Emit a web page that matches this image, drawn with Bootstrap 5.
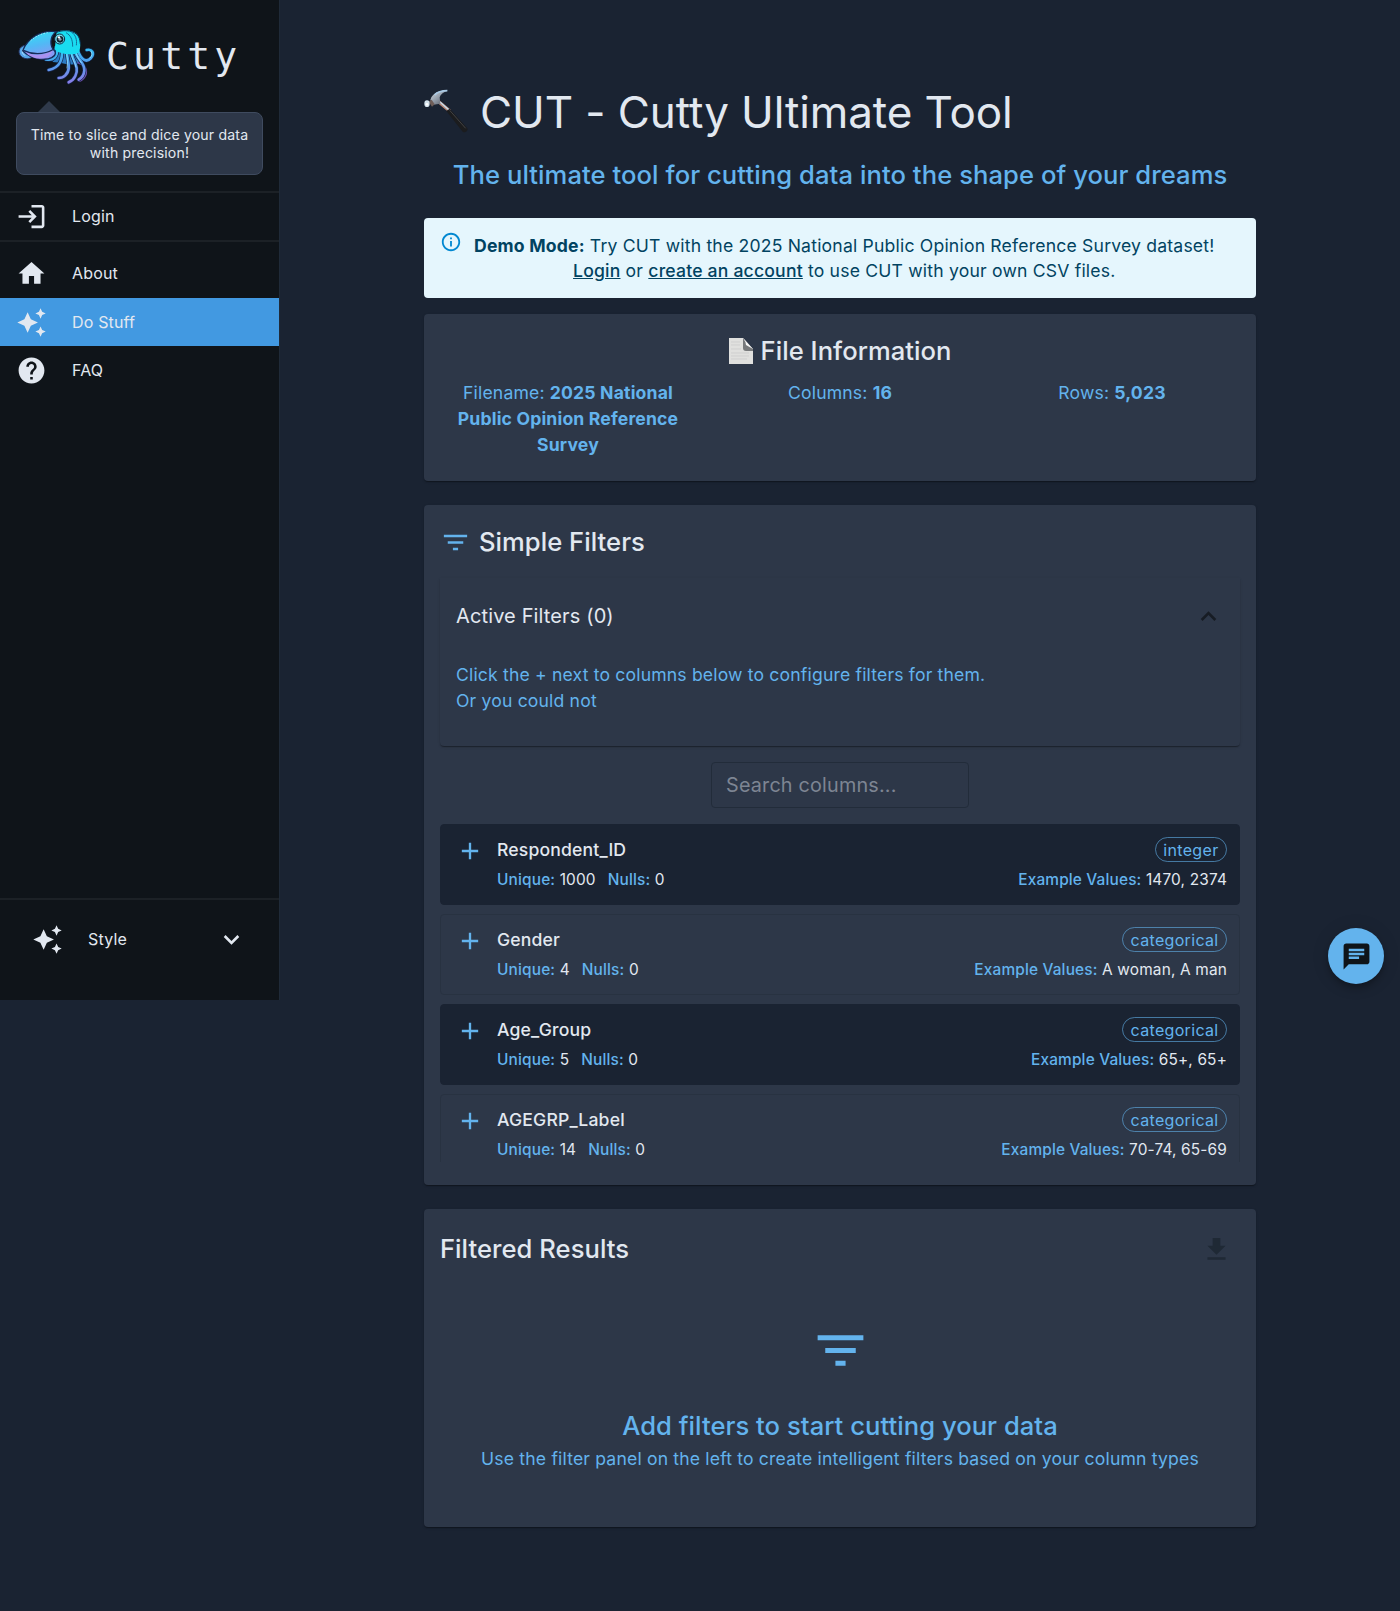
<!DOCTYPE html>
<html lang="en">
<head>
<meta charset="utf-8">
<meta name="viewport" content="width=device-width, initial-scale=1">
<title>CUT - Cutty Ultimate Tool</title>
<link href="https://cdn.jsdelivr.net/npm/bootstrap@5.3.0/dist/css/bootstrap.min.css" rel="stylesheet">
<style>
:root{--ink:#e2e8f0;--accent:#63b3ed;--panel:#2d3748;--page:#1a2332;--deep:#0f1419}
body{background:var(--page);color:var(--ink);font-family:Inter,"Liberation Sans",sans-serif;font-size:17.6px;line-height:1.5;letter-spacing:.00938em}
svg{display:block;flex:none}
.ico{width:31px;height:31px;fill:currentColor}
.accent{color:var(--accent)}
.side{width:280px;height:1000px;background:var(--deep);border-right:1px solid #1f2a38}
.brand-row{height:101px;padding:20px 0 0 10px}
.squid{width:90px;height:70px}
.wordmark{font:400 38px/1 "DejaVu Sans Mono",monospace;letter-spacing:4.2px;color:var(--ink);margin:17px 0 0 6px}
.caret{width:0;height:0;margin-left:38px;border:11px solid transparent;border-top:0;border-bottom-color:#2f3a4b}
.bubble{margin:0 16px 16px;height:63px;padding:13px 8px 10px;background:var(--panel);border:1px solid #3f4b5f;border-radius:8px;font-size:14.08px;line-height:18.2px;text-align:center}
.rule{height:2px;background:#1c2126}
.item{height:48px;padding-left:16px;gap:25px;font-size:16px;color:var(--ink);text-decoration:none}
.item.current{background:#4299e1}
.item.login{height:47px;padding-bottom:1px}
.item.about{padding-bottom:2px}
.style-item{height:80px;padding:0 32px 2px}
.main-col{width:832px;margin:84px auto 83px}
.title{font-size:44px;line-height:56px;font-weight:400;letter-spacing:-.002em;gap:10px;margin:0}
.tagline{font-size:25.6px;line-height:34px;font-weight:500;letter-spacing:.0028em;margin:18px 0 26px;text-align:center}
.notice{height:80px;margin-bottom:16px;padding:6px 16px;background:#e5f6fd;color:#014361;border-radius:4px;line-height:25.17px;letter-spacing:.01071em}
.notice a{color:inherit;font-weight:500}
.notice .info{width:22px;height:22px;fill:#0288d1;margin:7px 12px 0 0}
.notice .msg{padding-top:9px}
.panel{background:var(--panel);border-radius:4px;box-shadow:0 2px 1px -1px rgba(0,0,0,.2),0 1px 1px rgba(0,0,0,.14),0 1px 3px rgba(0,0,0,.12);padding:16px}
.panel h2,.empty h3{font-size:25.6px;line-height:34px;font-weight:500;letter-spacing:.0015em;margin:0}
.file{height:167px;margin-bottom:24px;padding-top:20px;text-align:center}
.file .cols{gap:16px;margin-top:12px;line-height:26px}
.filters{height:680px;margin-bottom:24px;padding-top:20px}
.acc{height:168px;margin-top:19px;padding:0 16px;border-radius:0 0 4px 4px;box-shadow:0 2px 1px -1px rgba(0,0,0,.2),0 1px 1px rgba(0,0,0,.14),0 1px 3px rgba(0,0,0,.12)}
.acc-head{height:76px;font-size:20px;letter-spacing:.0065em}
.acc-head svg{fill:#171c24;margin-right:0}
.acc p{margin:8px 0 0;line-height:26.4px}
.search{width:258px;height:46px;margin:16px auto;padding:0 14px;background:transparent;border:1px solid #222c3a;border-radius:4px;font-size:19.8px;letter-spacing:.00938em;color:var(--ink)}
.search::placeholder{color:#7d8593;opacity:1}
.search:focus{background:transparent;color:var(--ink)}
.rows{height:338px;overflow:hidden}
.col-item{height:81px;margin-bottom:9px;border:1px solid #283241;border-radius:4px;padding:11px 12px 0 15px}
.col-item.dark{background:var(--page);border-color:#1a2332}
.plus{width:28px;height:28px;fill:var(--accent);margin:1px 13px 0 0}
.nm{font-weight:500;line-height:27px;letter-spacing:.00938em}
.meta{font-size:15.4px;line-height:24px;margin-top:5px;letter-spacing:.0107em}
.meta b{font-weight:500;color:var(--accent)}
.chip{height:25px;padding:0 7.5px;border:1px solid rgba(99,179,237,.6);border-radius:13px;color:var(--accent);font-size:16px;line-height:24px;margin-top:1px;letter-spacing:.02em}
.results{height:318px;padding-top:23px}
.results .dl{fill:#1f2935;margin-right:8px}
.empty{margin-top:54px;text-align:center}
.empty .big{width:61px;height:61px;margin:0 auto 28px}
.empty h3{margin-bottom:3px}
.fab{position:fixed;left:1328px;top:928px;width:56px;height:56px;border-radius:50%;background:var(--accent);color:var(--deep);border:0;box-shadow:0 3px 5px -1px rgba(0,0,0,.2),0 6px 10px rgba(0,0,0,.14),0 1px 18px rgba(0,0,0,.12)}
</style>
</head>
<body>
<svg width="0" height="0" class="position-absolute" aria-hidden="true">
<symbol id="i-spark" viewBox="0 0 24 24"><path d="m19 9 1.25-2.75L23 5l-2.75-1.25L19 1l-1.25 2.75L15 5l2.75 1.25L19 9zm-7.5.5L9 4 6.5 9.5 1 12l5.500 2.500L9 20l2.500-5.500L17 12l-5.500-2.500zM19 15l-1.250 2.750L15 19l2.750 1.250L19 23l1.250-2.750L23 19l-2.750-1.250L19 15z"/></symbol>
<symbol id="i-filter" viewBox="0 0 24 24"><path d="M10 18h4v-2h-4v2zM3 6v2h18V6H3zm3 7h12v-2H6v2z"/></symbol>
<symbol id="i-plus" viewBox="0 0 24 24"><path d="M19 13h-6v6h-2v-6H5v-2h6V5h2v6h6v2z"/></symbol>
</svg>
<div class="d-flex align-items-start">
<aside class="side d-flex flex-column flex-shrink-0">
  <div class="brand-row d-flex align-items-start">
    <svg class="squid" viewBox="0 0 270 210" aria-hidden="true">
      <defs>
        <linearGradient id="mantle" x1=".3" y1="0" x2=".6" y2="1"><stop offset="0" stop-color="#2fe0f5"/><stop offset=".5" stop-color="#52b8f5"/><stop offset="1" stop-color="#8f95f4"/></linearGradient>
        <linearGradient id="arm" gradientUnits="userSpaceOnUse" x1="170" y1="50" x2="180" y2="195"><stop offset="0" stop-color="#16e1f5"/><stop offset=".5" stop-color="#4ba4ee"/><stop offset="1" stop-color="#8f7ae6"/></linearGradient>
      </defs>
      <path d="M46 76c-20 2-26 25-9 36 10 6 22 5 28 0L44 98z" fill="#57a5e8" stroke="#26335f" stroke-width="3"/>
      <path d="M37 88q-4 12 8 19" fill="none" stroke="#b5e6ff" stroke-width="3"/>
      <path d="M134 78h72q2 24 10 40l-14 14q-26 4-52-4l-22-2z" fill="#2b7cc4"/>
      <g fill="none" stroke-linecap="round">
        <path d="M205 128c20 8 28 22 21 38-4 9-10 14-18 17" stroke="#6a4fae" stroke-width="6"/>
        <g stroke="#142349" stroke-width="12"><path d="M198 72c10 44 28 60 45 42 12-14 3-28-13-24"/><path d="M192 80c2 38 34 44 31 72-1 12-8 22-17 27"/><path d="M182 80c-2 38 30 56 14 88-5 11-13 16-20 19"/><path d="M170 82c-2 35 18 63-4 84-6 6-14 8-20 8"/><path d="M156 84c2 34-4 58-40 66"/><path d="M143 85c-2 26-12 38-36 33"/></g>
        <g stroke="url(#arm)" stroke-width="8"><path d="M198 72c10 44 28 60 45 42 12-14 3-28-13-24"/><path d="M192 80c2 38 34 44 31 72-1 12-8 22-17 27"/><path d="M182 80c-2 38 30 56 14 88-5 11-13 16-20 19"/><path d="M170 82c-2 35 18 63-4 84-6 6-14 8-20 8"/><path d="M156 84c2 34-4 58-40 66"/><path d="M143 85c-2 26-12 38-36 33"/></g>
        <g stroke="#a6efff" stroke-width="2"><path d="M197 96c5 16 10 22 17 32"/><path d="M184 100c2 18 12 28 14 41"/><path d="M170 100q4 28 1 44"/><path d="M243 94q7 11-3 20"/></g>
      </g>
      <path d="M140 37c16-9 46-8 60 5 12 12 14 40 6 56-16 8-57 7-72-10z" fill="#19dcf1"/>
      <path d="M138 38c18-9 46-8 61 4 8 7 11 16 12 30" fill="none" stroke="#0c3659" stroke-width="3"/>
      <path d="M168 38c14 8 20 20 20 42M184 36c14 9 17 24 15 40" fill="none" stroke="#126e9a" stroke-width="3"/>
      <path d="M38 92c15-37 54-63 100-57-18 14-21 42-4 58 5 8 1 14-9 20-21 11-64 2-87-21z" fill="url(#mantle)" stroke="#172a56" stroke-width="4"/>
      <path d="M42 92c30 18 61 16 88-3-10 29-47 35-75 16z" fill="#aa91ef"/>
      <path d="M40 91q46 22 93-4" fill="none" stroke="#182b59" stroke-width="4"/>
      <path d="M62 62q22-20 51-24" fill="none" stroke="#b7f8ff" stroke-width="3" stroke-dasharray="4 5"/>
      <circle cx="149" cy="57" r="15" fill="#70d6e7" stroke="#102742" stroke-width="3"/><circle cx="150" cy="58" r="10" fill="#10202f"/><circle cx="150" cy="58" r="4.500" fill="#849eb1"/><circle cx="147" cy="52" r="3.500" fill="#fff"/>
    </svg>
    <div class="wordmark">Cutty</div>
  </div>
  <div class="caret"></div>
  <div class="bubble">Time to slice and dice your data with precision!</div>
  <div class="rule"></div>
  <a class="item login d-flex align-items-center" href="#"><svg class="ico" viewBox="0 0 24 24"><path d="M11 7 9.600 8.400l2.600 2.600H2v2h10.200l-2.600 2.600L11 17l5-5-5-5zm9 12h-8v2h8c1.100 0 2-.9 2-2V5c0-1.100-.9-2-2-2h-8v2h8v14z"/></svg>Login</a>
  <div class="rule"></div>
  <nav class="d-flex flex-column pt-2">
    <a class="item about d-flex align-items-center" href="#"><svg class="ico" viewBox="0 0 24 24"><path d="M10 20v-6h4v6h5v-8h3L12 3 2 12h3v8z"/></svg>About</a>
    <a class="item current d-flex align-items-center" href="#"><svg class="ico"><use href="#i-spark"/></svg>Do Stuff</a>
    <a class="item d-flex align-items-center" href="#"><svg class="ico" viewBox="0 0 24 24"><path d="M12 2C6.480 2 2 6.480 2 12s4.480 10 10 10 10-4.480 10-10S17.520 2 12 2zm1 17h-2v-2h2v2zm2.070-7.750-.9.920C13.450 12.900 13 13.500 13 15h-2v-.5c0-1.100.45-2.100 1.170-2.830l1.240-1.260c.37-.36.59-.86.59-1.410 0-1.100-.9-2-2-2s-2 .9-2 2H8c0-2.210 1.790-4 4-4s4 1.790 4 4c0 .88-.36 1.680-.93 2.250z"/></svg>FAQ</a>
  </nav>
  <div class="mt-auto pb-3 mb-1">
    <div class="rule"></div>
    <a class="item style-item d-flex align-items-center" href="#"><svg class="ico"><use href="#i-spark"/></svg>Style<svg class="ico ms-auto" viewBox="0 0 24 24"><path d="M16.590 8.590 12 13.170 7.410 8.590 6 10l6 6 6-6z"/></svg></a>
  </div>
</aside>
<main class="flex-grow-1">
  <div class="main-col">
    <h1 class="title d-flex align-items-center">
      <svg width="46" height="46" viewBox="27 37 138 138" aria-hidden="true">
        <defs><linearGradient id="steel" x1="0" y1="0" x2="1" y2="1"><stop offset="0" stop-color="#d4dde5"/><stop offset=".5" stop-color="#8e98a5"/><stop offset="1" stop-color="#4d4d55"/></linearGradient></defs>
        <path d="m72 76 33 28" stroke="#b98878" stroke-width="10"/><path d="m75 76 28 25" stroke="#c5dff0" stroke-width="4"/>
        <path d="m94 103 10-7 53 59c4 7-8 16-14 10z" fill="#1b1c1e"/><path d="m104 101 48 54" stroke="#424345" stroke-width="3"/>
        <path d="M98 42c-20-2-39 4-49 20l-3 8 9 14 21-3-2-19c3-9 10-15 24-20z" fill="url(#steel)"/><path d="M97 42c-16 0-30 4-38 13" fill="none" stroke="#a9c9e4" stroke-width="5"/>
        <path d="m50 69 9 14-8 7-10-15z" fill="#6e5d58"/><ellipse cx="36" cy="81" rx="8" ry="10" fill="#d4e3ed"/><circle cx="36" cy="83" r="4" fill="#fff"/>
      </svg>
      <span>CUT - Cutty Ultimate Tool</span>
    </h1>
    <p class="tagline accent">The ultimate tool for cutting data into the shape of your dreams</p>
    <div class="notice d-flex" role="alert">
      <svg class="info" viewBox="0 0 24 24"><path d="M11 7h2v2h-2zm0 4h2v6h-2zm1-9C6.480 2 2 6.480 2 12s4.480 10 10 10 10-4.480 10-10S17.520 2 12 2zm0 18c-4.410 0-8-3.590-8-8s3.590-8 8-8 8 3.590 8 8-3.590 8-8 8z"/></svg>
      <div class="msg text-center"><b>Demo Mode:</b> Try CUT with the 2025 National Public Opinion Reference Survey dataset!<br><a href="#">Login</a> or <a href="#">create an account</a> to use CUT with your own CSV files.</div>
    </div>

    <section class="panel file">
      <h2 class="d-flex justify-content-center align-items-center"><svg width="24" height="26" viewBox="0 0 24 26" class="me-2" aria-hidden="true"><path d="M0 0h14l10 11v15H0z" fill="#e0e0de"/><path d="M14 0v10q0 3 3 3h7v-2z" fill="#77797b"/><path d="M14 0q3 4 3 7l7 4z" fill="#f8f8f8"/><path d="M2 4h9M2 7h9M2 11h10M2 15h18M2 18h18M2 21h16" stroke="#cfcfcf"/></svg>File Information</h2>
      <div class="cols d-flex accent">
        <div class="col">Filename: <b>2025 National Public Opinion Reference Survey</b></div>
        <div class="col">Columns: <b>16</b></div>
        <div class="col">Rows: <b>5,023</b></div>
      </div>
    </section>

    <section class="panel filters">
      <h2 class="d-flex align-items-center gap-2"><svg class="ico accent"><use href="#i-filter"/></svg>Simple Filters</h2>
      <div class="acc">
        <div class="acc-head d-flex justify-content-between align-items-center">Active Filters (0)<svg class="ico" viewBox="0 0 24 24"><path d="m12 8-6 6 1.410 1.410L12 10.830l4.590 4.580L18 14z"/></svg></div>
        <p class="accent">Click the + next to columns below to configure filters for them.<br>Or you could not</p>
      </div>
      <input class="search form-control" type="text" placeholder="Search columns...">
      <div class="rows">
        <div class="col-item dark d-flex align-items-start"><svg class="plus"><use href="#i-plus"/></svg><div class="flex-grow-1"><div class="d-flex justify-content-between align-items-start"><span class="nm">Respondent_ID</span><span class="chip">integer</span></div><div class="meta d-flex"><span class="me-2 pe-1"><b>Unique:</b> 1000</span><span><b>Nulls:</b> 0</span><span class="ms-auto"><b>Example Values:</b> 1470, 2374</span></div></div></div>
        <div class="col-item d-flex align-items-start"><svg class="plus"><use href="#i-plus"/></svg><div class="flex-grow-1"><div class="d-flex justify-content-between align-items-start"><span class="nm">Gender</span><span class="chip">categorical</span></div><div class="meta d-flex"><span class="me-2 pe-1"><b>Unique:</b> 4</span><span><b>Nulls:</b> 0</span><span class="ms-auto"><b>Example Values:</b> A woman, A man</span></div></div></div>
        <div class="col-item dark d-flex align-items-start"><svg class="plus"><use href="#i-plus"/></svg><div class="flex-grow-1"><div class="d-flex justify-content-between align-items-start"><span class="nm">Age_Group</span><span class="chip">categorical</span></div><div class="meta d-flex"><span class="me-2 pe-1"><b>Unique:</b> 5</span><span><b>Nulls:</b> 0</span><span class="ms-auto"><b>Example Values:</b> 65+, 65+</span></div></div></div>
        <div class="col-item d-flex align-items-start"><svg class="plus"><use href="#i-plus"/></svg><div class="flex-grow-1"><div class="d-flex justify-content-between align-items-start"><span class="nm">AGEGRP_Label</span><span class="chip">categorical</span></div><div class="meta d-flex"><span class="me-2 pe-1"><b>Unique:</b> 14</span><span><b>Nulls:</b> 0</span><span class="ms-auto"><b>Example Values:</b> 70-74, 65-69</span></div></div></div>
      </div>
    </section>

    <section class="panel results">
      <div class="d-flex justify-content-between align-items-center"><h2>Filtered Results</h2><svg class="ico dl" viewBox="0 0 24 24"><path d="M5 20h14v-2H5v2zM19 9h-4V3H9v6H5l7 7 7-7z"/></svg></div>
      <div class="empty accent">
        <svg class="ico big"><use href="#i-filter"/></svg>
        <h3>Add filters to start cutting your data</h3>
        <div>Use the filter panel on the left to create intelligent filters based on your column types</div>
      </div>
    </section>
  </div>
</main>
</div>
<button class="fab d-flex align-items-center justify-content-center p-0" aria-label="Chat"><svg class="ico" viewBox="0 0 24 24"><path d="M20 2H4c-1.100 0-1.990.9-1.990 2L2 22l4-4h14c1.100 0 2-.9 2-2V4c0-1.100-.9-2-2-2zM6 9h12v2H6V9zm8 5H6v-2h8v2zm4-6H6V6h12v2z"/></svg></button>
<script src="https://cdn.jsdelivr.net/npm/bootstrap@5.3.0/dist/js/bootstrap.bundle.min.js"></script>
</body>
</html>
